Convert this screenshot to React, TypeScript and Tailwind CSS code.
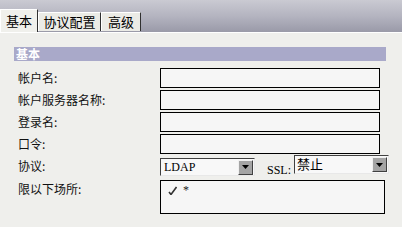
const CJK = '"Noto Sans CJK SC", "Liberation Sans", sans-serif'
const SERIF = '"Liberation Serif", "Noto Sans CJK SC", serif'

function DropButton() {
  return (
    <div className="flex h-[15px] w-[15px] items-center justify-center border-t border-l border-t-[#f0f0f0] border-l-[#f0f0f0] border-r border-b border-r-[#404040] border-b-[#404040] bg-[#a4a4a4]">
      <svg width="7" height="4" viewBox="0 0 7 4">
        <path d="M0 0h7L3.5 4z" fill="#000" />
      </svg>
    </div>
  )
}

function TextBox() {
  return <div className="h-[20px] w-[220px] border border-black bg-[#f6f6f6]" />
}

function Label({ children }: { children: React.ReactNode }) {
  return <div className="w-[160px] pl-[18px] text-[12px] leading-none text-[#111]">{children}</div>
}

export default function App() {
  return (
    <div className="flex h-[227px] w-[402px] flex-col overflow-hidden bg-[#efefec]" style={{ fontFamily: CJK }}>
      {/* tab strip over gradient */}
      <div className="flex h-[32px] items-end bg-gradient-to-b from-[#cacad2] via-[#b4b4c0] to-[#9a9aa8]">
        <div className="flex h-[23px] w-[38px] items-center justify-center border-t border-l border-white border-r border-r-[#303030] bg-[#f0f0ec] text-[13px] text-black">
          基本
        </div>
        <div className="mb-px flex h-[19px] w-[63px] items-center justify-center border-t border-l border-white border-r border-r-[#303030] bg-[#ebebe6] text-[13px] text-black">
          协议配置
        </div>
        <div className="mb-px flex h-[19px] w-[40px] items-center justify-center border-t border-l border-white border-r border-r-[#303030] bg-[#ebebe6] text-[13px] text-black">
          高级
        </div>
      </div>

      <div className="flex flex-1 flex-col border-t border-white bg-[#efefec]">
        <div className="mt-[14px] ml-[14px] flex h-[14px] w-[372px] items-center bg-[#a9a9c9] pl-[2px] text-[12px] font-bold leading-none text-white">
          基本
        </div>

        <div className="mt-[7px] flex flex-col gap-[2px]">
          <div className="flex items-center">
            <Label>帐户名:</Label>
            <TextBox />
          </div>
          <div className="flex items-center">
            <Label>帐户服务器名称:</Label>
            <TextBox />
          </div>
          <div className="flex items-center">
            <Label>登录名:</Label>
            <TextBox />
          </div>
          <div className="flex items-center">
            <Label>口令:</Label>
            <TextBox />
          </div>

          <div className="flex h-[20px] items-center">
            <Label>协议:</Label>
            <div className="mt-[2px] flex h-[18px] w-[95px] items-center justify-between border border-t-[#404040] border-l-[#404040] border-r-[#e8e8e8] border-b-[#e8e8e8] bg-[#f8f8f8] pr-px pl-[3px]">
              <span className="text-[12px] leading-none text-black" style={{ fontFamily: SERIF }}>LDAP</span>
              <DropButton />
            </div>
            <span className="mt-[8px] ml-[12px] w-[27px] text-[12px] leading-none text-black" style={{ fontFamily: SERIF }}>
              SSL:
            </span>
            <div className="-mt-[3px] flex h-[19px] w-[95px] items-start justify-between border border-t-[#404040] border-l-[#404040] border-r-[#e8e8e8] border-b-[#e8e8e8] bg-[#f8f8f8] pt-px pr-px pl-[2px]">
              <span className="text-[13px] leading-none text-black">禁止</span>
              <DropButton />
            </div>
          </div>

          <div className="mt-[2px] flex items-start">
            <div className="mt-[3px]">
              <Label>限以下场所:</Label>
            </div>
            <div className="h-[34px] w-[225px] border border-black bg-[#f6f6f6] pt-[3px] pl-[7px]">
              <div className="flex items-center gap-[6px] text-[12px] leading-none text-[#222]">
                <svg width="9" height="9" viewBox="0 0 9 9">
                  <path d="M1 6l2 2.5L8.5 1" stroke="#333" strokeWidth="1.6" fill="none" />
                </svg>
                <span style={{ fontFamily: SERIF }}>*</span>
              </div>
            </div>
          </div>
        </div>
      </div>
    </div>
  )
}
